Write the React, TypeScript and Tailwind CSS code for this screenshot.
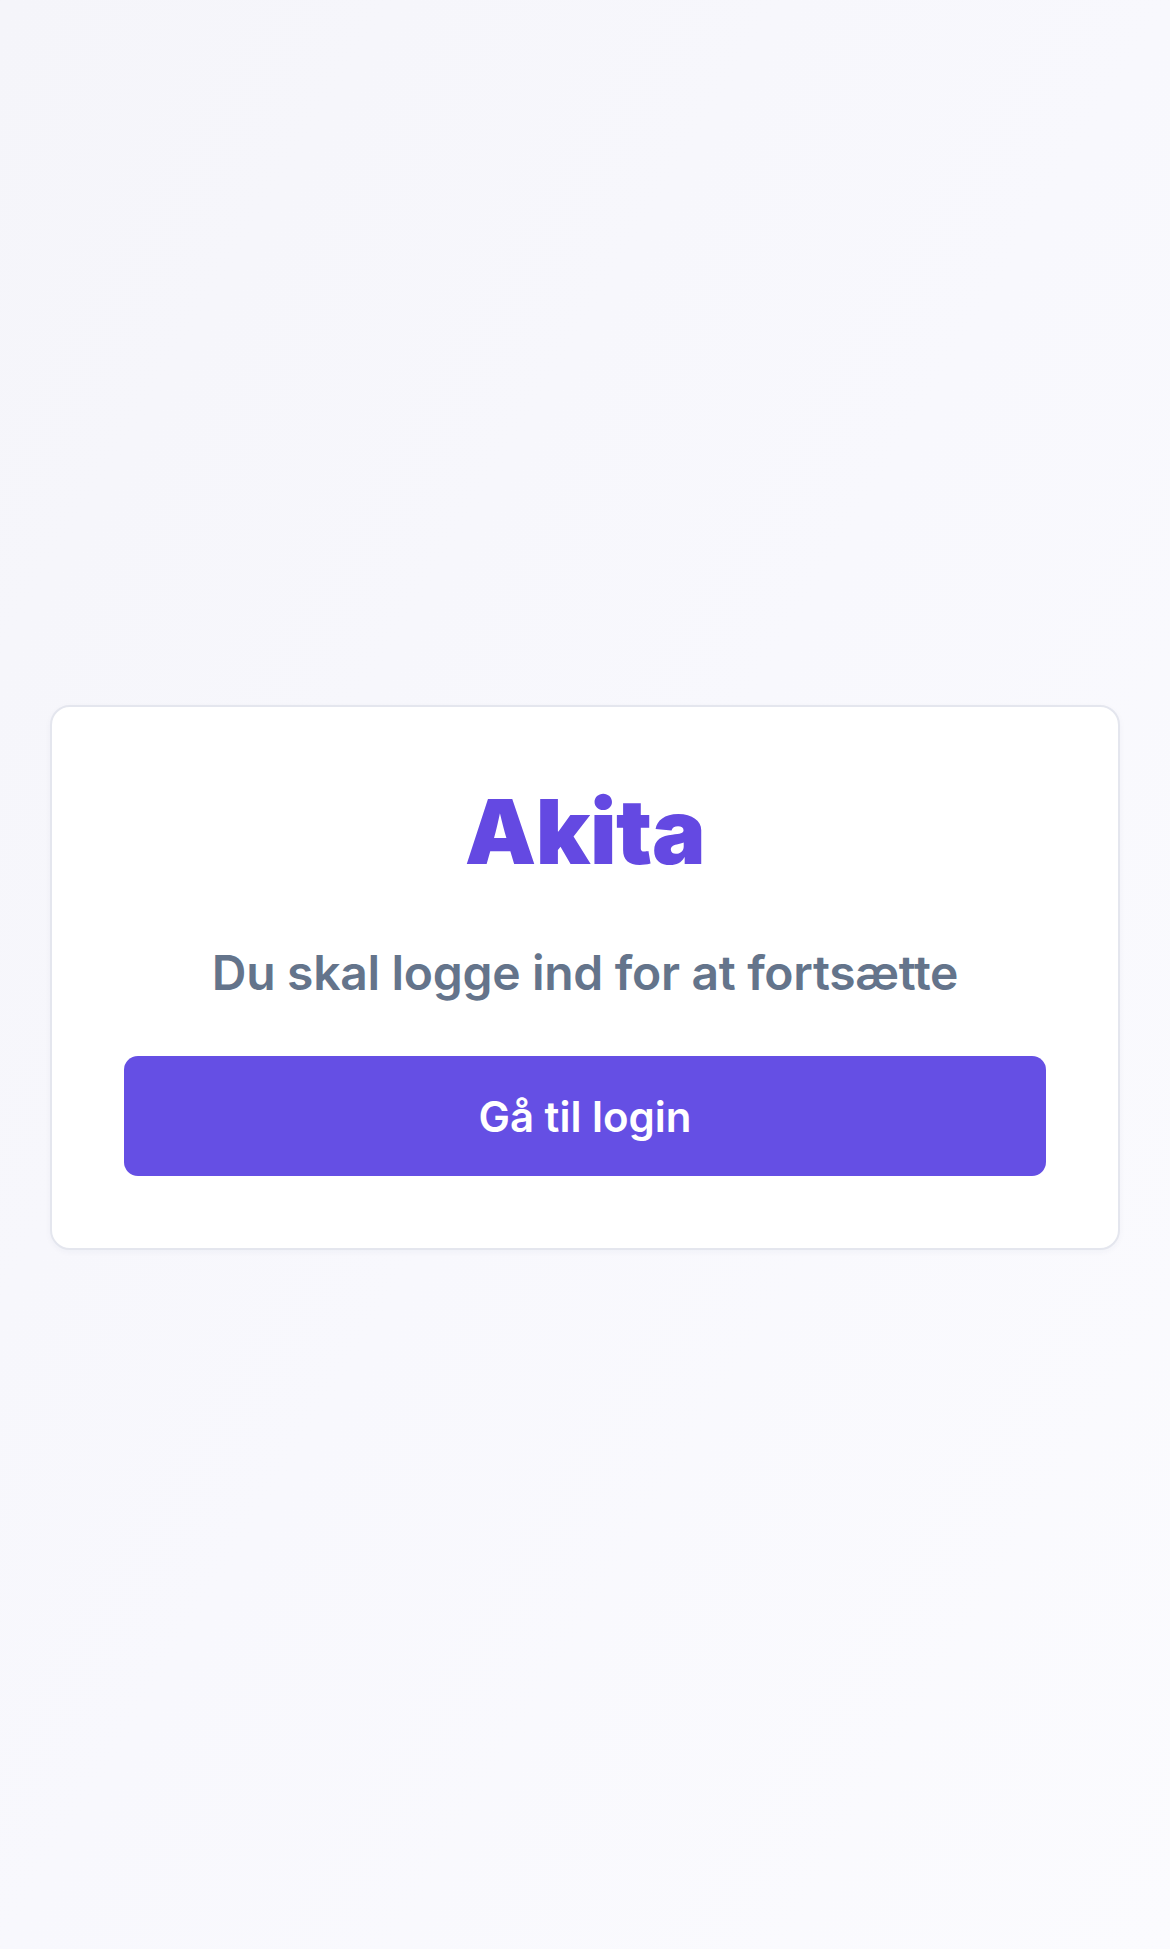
import React from "react";

export default function App() {
  return (
    <div className="min-h-[1949px] w-full bg-gradient-to-br from-[#f5f5fa] via-[#f8f8fd] to-[#fbfbfe] flex items-center justify-center px-[50px] pt-[6px]" style={{ fontFamily: "Inter, 'Noto Sans', sans-serif" }}>
      <div className="w-full bg-white border-2 border-[#e4e6ee] rounded-[20px] shadow-[0_2px_6px_rgba(30,40,90,0.04)] px-[72px] pt-[72px] pb-[72px] flex flex-col items-center">
        <h1 className="text-[90px] leading-[106px] font-black text-[#6449e2] tracking-[-0.5px]">Akita</h1>
        <p className="mt-[52px] text-[48px] leading-[72px] font-semibold text-[#64748b] tracking-[-0.3px]">Du skal logge ind for at fortsætte</p>
        <button className="mt-[47px] w-full h-[120px] rounded-[14px] bg-[#654fe4] text-white text-[42px] font-semibold flex items-center justify-center">
          Gå til login
        </button>
      </div>
    </div>
  );
}
